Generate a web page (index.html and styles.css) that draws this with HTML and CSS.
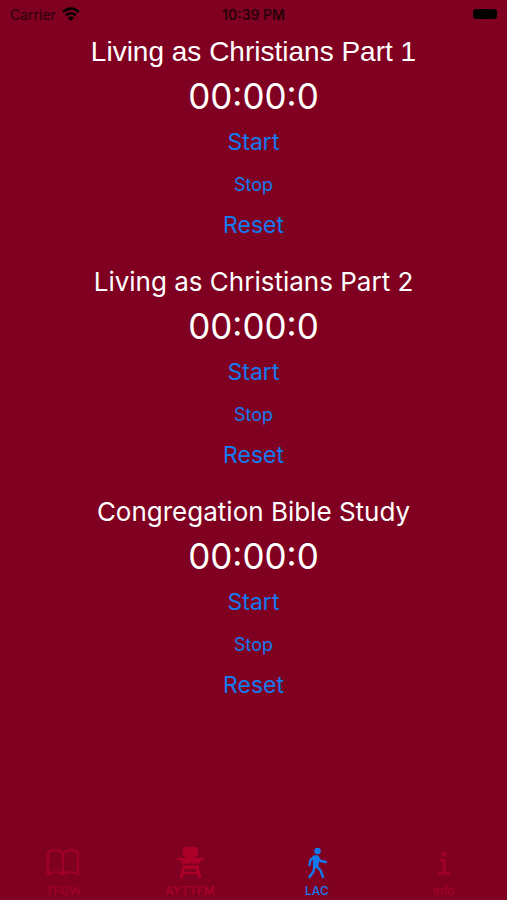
FILE: index.html
```html
<!DOCTYPE html>
<html lang="en">
<head>
    <meta charset="UTF-8">
    <meta name="viewport" content="width=device-width, initial-scale=1.0">
    <title>Living as Christians</title>
    <link rel="stylesheet" href="styles.css">
</head>
<body>

    <!-- Status Bar -->
    <header class="status-bar">
        <div class="carrier">
            <span>Carrier</span>
            <svg class="wifi" viewBox="0 0 18 14" fill="none" stroke="currentColor" stroke-width="2.4">
                <path d="M1 5 Q9 -2 17 5"/>
                <path d="M4 8.3 Q9 4 14 8.3"/>
                <path d="M9 14 L5.8 10.8 Q9 8 12.2 10.8 Z" fill="currentColor" stroke="none"/>
            </svg>
        </div>
        <div class="clock">10:39 PM</div>
        <div class="battery-box"><div class="battery"></div></div>
    </header>

    <!-- Timers -->
    <main class="timers">
        <section class="timer">
            <h2 class="title classic">Living as Christians Part 1</h2>
            <div class="time">00:00:0</div>
            <button class="start">Start</button>
            <button class="stop">Stop</button>
            <button class="reset">Reset</button>
        </section>

        <section class="timer">
            <h2 class="title">Living as Christians Part 2</h2>
            <div class="time">00:00:0</div>
            <button class="start">Start</button>
            <button class="stop">Stop</button>
            <button class="reset">Reset</button>
        </section>

        <section class="timer">
            <h2 class="title">Congregation Bible Study</h2>
            <div class="time">00:00:0</div>
            <button class="start">Start</button>
            <button class="stop">Stop</button>
            <button class="reset">Reset</button>
        </section>
    </main>

    <!-- Tab Bar -->
    <nav class="tab-bar">
        <a href="#tfgw" class="tab faint">
            <svg viewBox="0 0 36 36" fill="none" stroke="currentColor" stroke-width="2.2" stroke-linejoin="round">
                <path d="M18 9 C16 4 6 4 3 8 V30 C7 26 15 26 18 30 C21 26 29 26 33 30 V8 C30 4 20 4 18 9 Z"/>
                <path d="M18 9 V30"/>
            </svg>
            <span>TFGW</span>
        </a>
        <a href="#ayttfm" class="tab">
            <svg viewBox="0 0 36 36" fill="currentColor">
                <rect x="10.5" y="2" width="15.5" height="8.5" rx="2"/>
                <path d="M13 10 H24 V13 H31.5 V15.5 H28 V18.5 H9 V15.5 H5 V13 H13 Z"/>
                <path d="M10 20.5 H27 V24 H10 Z"/>
                <path d="M10 24 H13 L10.5 33 H7.5 Z M24 24 H27 L29.5 33 H26.5 Z"/>
                <path d="M12 27 H25 V29 H12 Z"/>
            </svg>
            <span>AYTTFM</span>
        </a>
        <a href="#lac" class="tab active">
            <svg viewBox="0 0 36 36" fill="none" stroke="currentColor" stroke-width="2.4" stroke-linecap="round" stroke-linejoin="round">
                <circle cx="18.6" cy="6" r="3.2" fill="currentColor" stroke="none"/>
                <path d="M15.5 11.5 L18.5 11.5 L19 15 L18 22 L15 21 Z" fill="currentColor"/>
                <path d="M15 12 L11.5 15 L10.5 20"/>
                <path d="M18.5 12 L21.5 16 L27 17"/>
                <path d="M15.5 21 L14.5 26.5 L10.5 32"/>
                <path d="M17.5 21 L21.5 25.5 L24 32"/>
            </svg>
            <span>LAC</span>
        </a>
        <a href="#info" class="tab faint">
            <svg viewBox="0 0 36 36" fill="currentColor">
                <circle cx="18" cy="9" r="2.6"/>
                <path d="M13 14 H20 V27 H24 V29.5 H12 V27 H16.5 V16.5 H13 Z"/>
            </svg>
            <span>Info</span>
        </a>
    </nav>

</body>
</html>
```
FILE: styles.css
```css
body {
    margin: 0;
    min-height: 100vh;
    display: flex;
    flex-direction: column;
    background-color: #800022; /* Maroon background */
    color: #ffffff;
    font-family: Inter, "Liberation Sans", sans-serif;
}

/* Status bar */
.status-bar {
    display: flex;
    align-items: center;
    height: 28px;
    padding: 0 10px;
    color: #26000a;
    font-size: 14px;
}

.carrier,
.battery-box {
    flex: 1;
    display: flex;
    align-items: center;
    gap: 6px;
}

.battery-box {
    justify-content: flex-end;
}

.wifi {
    width: 18px;
    height: 14px;
    color: #000000;
}

.clock {
    font-weight: 600;
}

.battery {
    width: 24px;
    height: 10px;
    border-radius: 3px;
    background-color: #000000;
}

/* Timers */
.timers {
    flex: 1;
    display: flex;
    flex-direction: column;
    gap: 12px;
    padding-top: 2px;
}

.timer {
    display: flex;
    flex-direction: column;
    align-items: center;
}

.title {
    margin: 0;
    font-size: 26px;
    font-weight: 400;
    line-height: 44px;
}

.classic {
    font-family: "Liberation Sans", Arial, sans-serif;
    font-size: 28px;
}

.time {
    font-size: 35px;
    line-height: 44px;
}

button {
    padding: 0 12px;
    border: none;
    background: none;
    color: #147aee; /* Blue actions */
    font-family: inherit;
    font-size: 23px;
    cursor: pointer;
}

.start {
    height: 48px;
}

.stop {
    height: 36px;
    font-size: 18px;
}

.reset {
    height: 46px;
}

/* Tab bar */
.tab-bar {
    display: flex;
    padding-bottom: 2px;
}

.tab {
    flex: 1;
    display: flex;
    flex-direction: column;
    align-items: center;
    color: #ac0028;
    font-size: 12px;
    line-height: 14px;
    font-weight: 500;
    text-decoration: none;
}

.tab svg {
    width: 36px;
    height: 36px;
    margin-bottom: 3px;
}

.faint {
    color: #a00027;
}

.active {
    color: #147aee;
}
```
